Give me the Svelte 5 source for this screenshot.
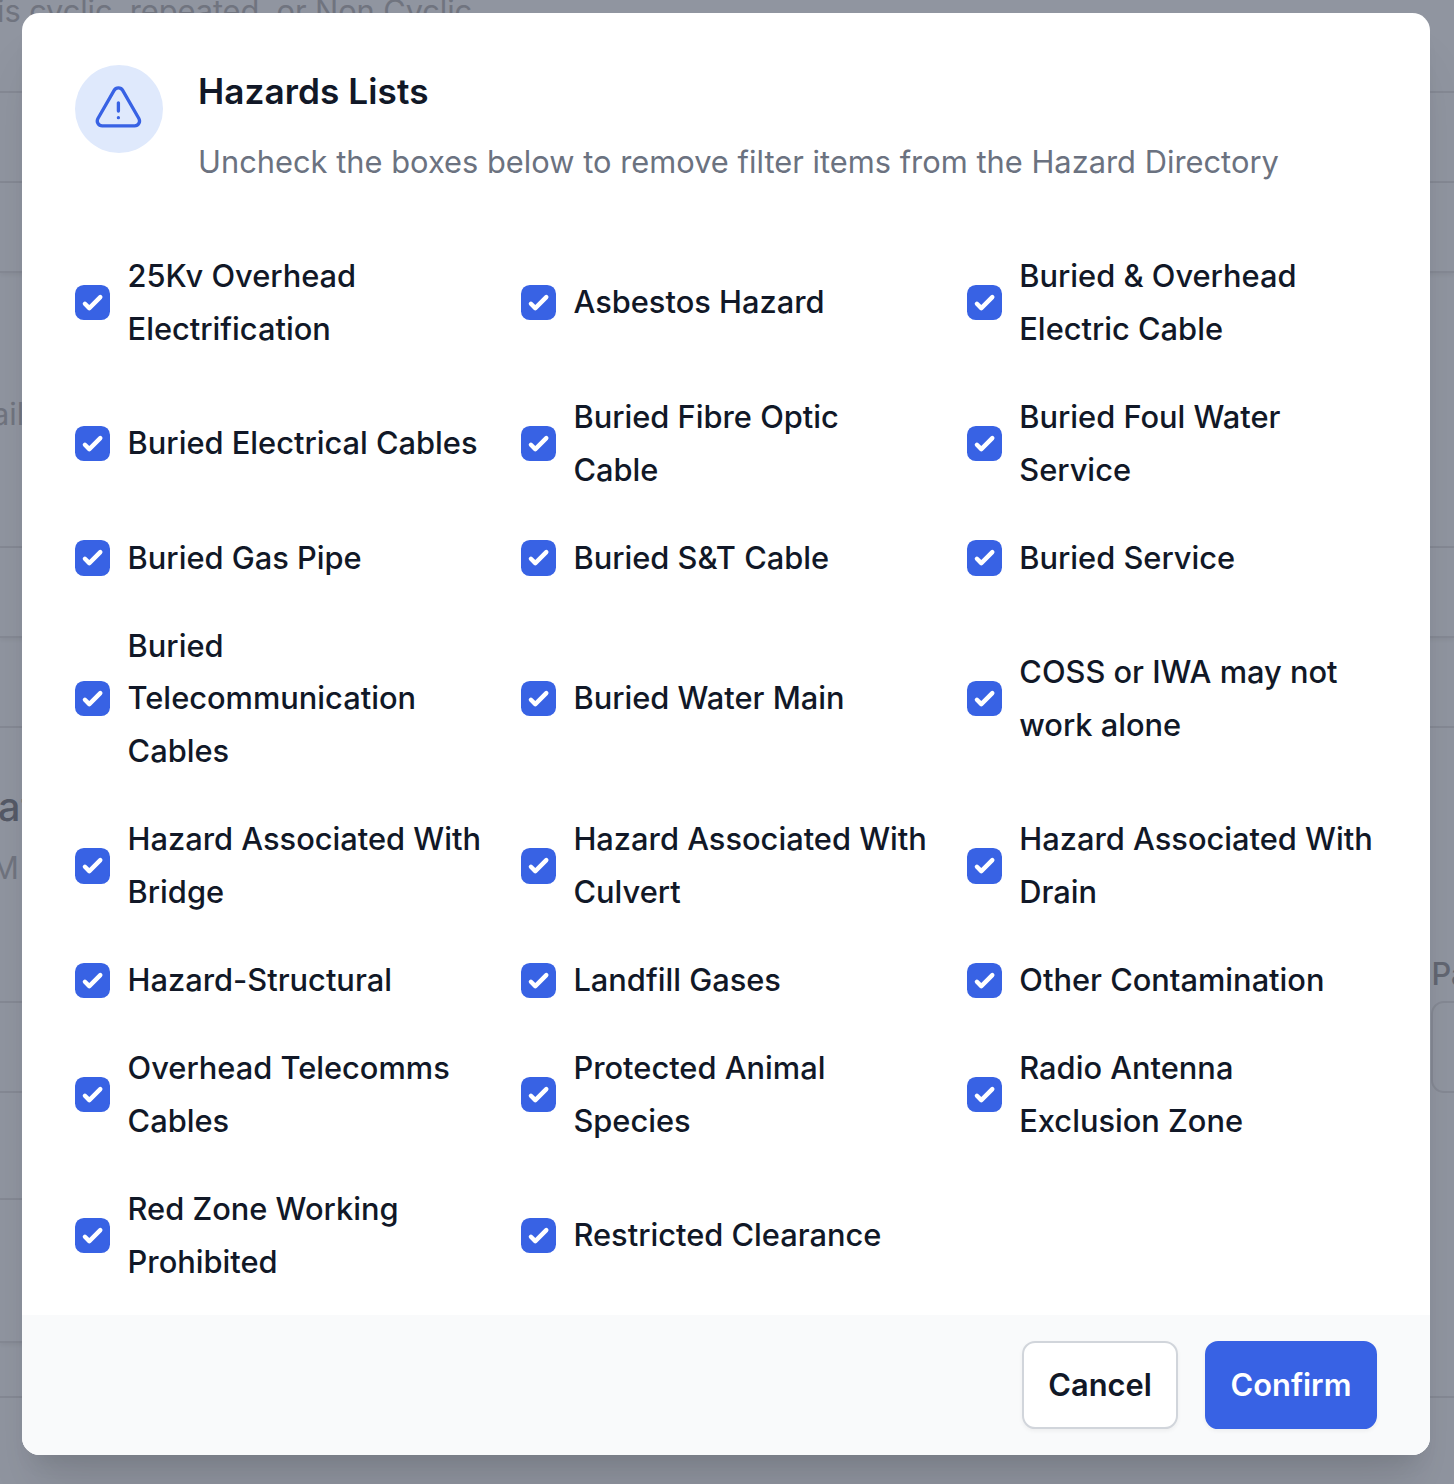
<script lang="ts">
	type Line = { y: number; shadow?: boolean };

	const hazards = [
		'25Kv Overhead Electrification',
		'Asbestos Hazard',
		'Buried & Overhead Electric Cable',
		'Buried Electrical Cables',
		'Buried Fibre Optic Cable',
		'Buried Foul Water Service',
		'Buried Gas Pipe',
		'Buried S&T Cable',
		'Buried Service',
		'Buried Telecommunication Cables',
		'Buried Water Main',
		'COSS or IWA may not work alone',
		'Hazard Associated With Bridge',
		'Hazard Associated With Culvert',
		'Hazard Associated With Drain',
		'Hazard-Structural',
		'Landfill Gases',
		'Other Contamination',
		'Overhead Telecomms Cables',
		'Protected Animal Species',
		'Radio Antenna Exclusion Zone',
		'Red Zone Working Prohibited',
		'Restricted Clearance'
	];

	let checked = $state(hazards.map(() => true));

	// bottom edges of the form rows behind the dialog
	const leftLines: Line[] = [
		{ y: 93 },
		{ y: 183 },
		{ y: 273, shadow: true },
		{ y: 548 },
		{ y: 638, shadow: true },
		{ y: 728 },
		{ y: 1003 },
		{ y: 1093 },
		{ y: 1200 },
		{ y: 1343, shadow: true },
		{ y: 1398 }
	];
	const rightLines: Line[] = leftLines.filter((l) => l.y < 800 || l.y > 1350);

	function rows(lines: Line[]) {
		return lines.map((l, i) => ({ ...l, height: l.y - (i ? lines[i - 1].y : 0) }));
	}
</script>

<div class="page">
	<div class="backdrop">
		<div class="strip">
			{#each rows(leftLines) as row}
				<div class="row" class:shadow={row.shadow} style="height: {row.height}px"></div>
			{/each}
		</div>
		<div class="strip">
			{#each rows(rightLines) as row}
				<div class="row" class:shadow={row.shadow} style="height: {row.height}px"></div>
			{/each}
		</div>
		<span class="ghost cyclic">is cyclic, repeated, or Non Cyclic</span>
		<span class="ghost details">ail</span>
		<span class="ghost heading">at</span>
		<span class="ghost mon">M</span>
		<span class="ghost label">Pa</span>
		<span class="field"></span>
	</div>

	<div class="dialog" role="dialog" aria-labelledby="title">
		<div class="body">
			<header>
				<div class="badge">
					<svg viewBox="0 0 24 24" fill="none" stroke="currentColor" stroke-width="1.5">
						<path
							stroke-linecap="round"
							stroke-linejoin="round"
							d="M12 9v3.75m-9.303 3.376c-.866 1.5.217 3.374 1.948 3.374h14.71c1.73 0 2.813-1.874 1.948-3.374L13.949 3.378c-.866-1.5-3.032-1.5-3.898 0L2.697 16.126zM12 15.75h.007v.008H12v-.008z"
						/>
					</svg>
				</div>
				<div class="heading-text">
					<h3 id="title">Hazards Lists</h3>
					<p>Uncheck the boxes below to remove filter items from the Hazard Directory</p>
				</div>
			</header>

			<div class="grid">
				{#each hazards as hazard, i}
					<label>
						<input type="checkbox" bind:checked={checked[i]} />
						<span class="box" class:on={checked[i]}>
							{#if checked[i]}
								<svg viewBox="0 0 16 16" fill="currentColor">
									<path
										d="M12.207 4.793a1 1 0 010 1.414l-5 5a1 1 0 01-1.414 0l-2-2a1 1 0 011.414-1.414L6.5 9.086l4.293-4.293a1 1 0 011.414 0z"
									/>
								</svg>
							{/if}
						</span>
						<span class="name">{hazard}</span>
					</label>
				{/each}
			</div>
		</div>

		<footer>
			<button class="cancel">Cancel</button>
			<button class="confirm">Confirm</button>
		</footer>
	</div>
</div>

<style>
	:global(body) {
		margin: 0;
	}
	.page {
		--blue: #3862e4;
		--ink: #111827;
		position: relative;
		box-sizing: border-box;
		width: 1454px;
		height: 1484px;
		padding: 13px 24px 0 22px;
		overflow: hidden;
		background: #9095a0;
		color: var(--ink);
		font-family: Inter, sans-serif;
		font-size: 30.8px;
		line-height: 52.8px;
	}
	.backdrop {
		position: absolute;
		inset: 0;
		display: flex;
		justify-content: space-between;
	}
	.strip {
		width: 40px;
	}
	.row {
		box-sizing: border-box;
		border-bottom: 2px solid #858994;
	}
	.row.shadow {
		box-shadow: 0 2px 4px rgba(0, 0, 0, 0.05);
	}
	.ghost {
		position: absolute;
		white-space: nowrap;
		color: #70747f;
	}
	.cyclic {
		left: -3px;
		top: -15px;
		letter-spacing: -0.08px;
	}
	.details {
		left: -8px;
		top: 388px;
	}
	.heading {
		left: -2px;
		top: 781px;
		font-size: 39.6px;
		font-weight: 500;
		letter-spacing: 1px;
		color: #555a67;
	}
	.mon {
		left: -9px;
		top: 842px;
	}
	.label {
		left: 1431.5px;
		top: 948px;
		font-weight: 500;
		color: #626672;
	}
	.field {
		position: absolute;
		left: 1431px;
		top: 1001px;
		width: 60px;
		height: 88px;
		border: 2px solid #858994;
		border-radius: 13px;
	}
	.dialog {
		position: relative;
		display: flex;
		flex-direction: column;
		height: 1442px;
		border-radius: 17.6px;
		overflow: hidden;
		background: #fff;
		box-shadow:
			0 44px 55px -11px rgba(0, 0, 0, 0.1),
			0 17.6px 22px -13.2px rgba(0, 0, 0, 0.1);
	}
	.body {
		flex: 1;
		padding: 52.4px 52.8px 0;
	}
	header {
		display: flex;
		gap: 35.2px;
		height: 184.7px;
	}
	.badge {
		display: flex;
		align-items: center;
		justify-content: center;
		flex: none;
		width: 88px;
		height: 88px;
		border-radius: 50%;
		background: #dfe9fc;
		color: var(--blue);
	}
	.badge svg {
		width: 52.8px;
		height: 52.8px;
	}
	h3 {
		margin: 0;
		font-size: 35.2px;
		font-weight: 600;
		letter-spacing: 0.06px;
	}
	p {
		margin: 17.6px 0 0;
		letter-spacing: 0.025px;
		color: #6b7280;
	}
	.grid {
		display: grid;
		grid-template-columns: repeat(3, minmax(0, 1fr));
		gap: 35.2px;
	}
	label {
		display: flex;
		align-items: center;
		font-weight: 500;
	}
	input {
		position: absolute;
		opacity: 0;
	}
	.box {
		flex: none;
		box-sizing: border-box;
		width: 35.2px;
		height: 35.2px;
		margin-right: 17.6px;
		border: 2px solid #d1d5db;
		border-radius: 8.8px;
		color: #fff;
	}
	.box.on {
		border: 0;
		background: var(--blue);
	}
	.box svg {
		display: block;
		width: 100%;
		height: 100%;
	}
	footer {
		display: flex;
		justify-content: flex-end;
		gap: 27px;
		box-sizing: border-box;
		height: 140px;
		padding: 26px 53px;
		background: #f9fafb;
	}
	button {
		box-sizing: border-box;
		height: 88px;
		padding: 0;
		border: 2px solid transparent;
		border-radius: 13.2px;
		font: inherit;
		font-weight: 600;
		box-shadow: 0 2px 4px rgba(0, 0, 0, 0.05);
	}
	.cancel {
		width: 156px;
		border-color: #d1d5db;
		background: #fff;
		color: var(--ink);
	}
	.confirm {
		width: 172px;
		border-color: var(--blue);
		background: var(--blue);
		color: #fff;
	}
</style>
